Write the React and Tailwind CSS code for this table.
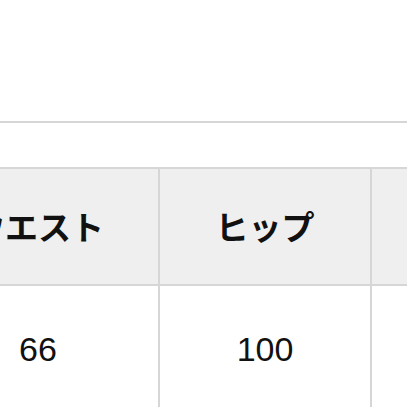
import React from 'react';

const columns = [
  { label: 'ウエスト', value: '66', width: 'w-[242px]' },
  { label: 'ヒップ', value: '100', width: 'w-[212px]' },
  { label: '', value: '', width: 'w-[200px]' },
];

export default function App() {
  return (
    <div className="w-[407px] h-[407px] overflow-hidden bg-white" style={{ fontFamily: '"Liberation Sans", "Noto Sans CJK JP", sans-serif' }}>
      <div className="h-[121px]" />
      <div className="h-[2px] bg-[#d6d6d6]" />
      <div className="h-[44px]" />
      <div className="ml-[-82px] border-t-2 border-[#d6d6d6] w-max">
        <div className="flex bg-[#efefef] border-b-2 border-[#d6d6d6]">
          {columns.map((col, i) => (
            <div
              key={i}
              className={`${col.width} h-[115px] flex items-center justify-center text-[33px] font-bold text-[#111] ${i < 2 ? 'border-r-2 border-[#d6d6d6]' : ''}`}
              style={{ fontFamily: '"Noto Sans CJK JP", sans-serif' }}
            >
              {col.label}
            </div>
          ))}
        </div>
        <div className="flex bg-white">
          {columns.map((col, i) => (
            <div
              key={i}
              className={`${col.width} h-[126px] flex items-center justify-center text-[34px] text-[#111] ${i < 2 ? 'border-r-2 border-[#d6d6d6]' : ''}`}
            >
              {col.value}
            </div>
          ))}
        </div>
      </div>
    </div>
  );
}
